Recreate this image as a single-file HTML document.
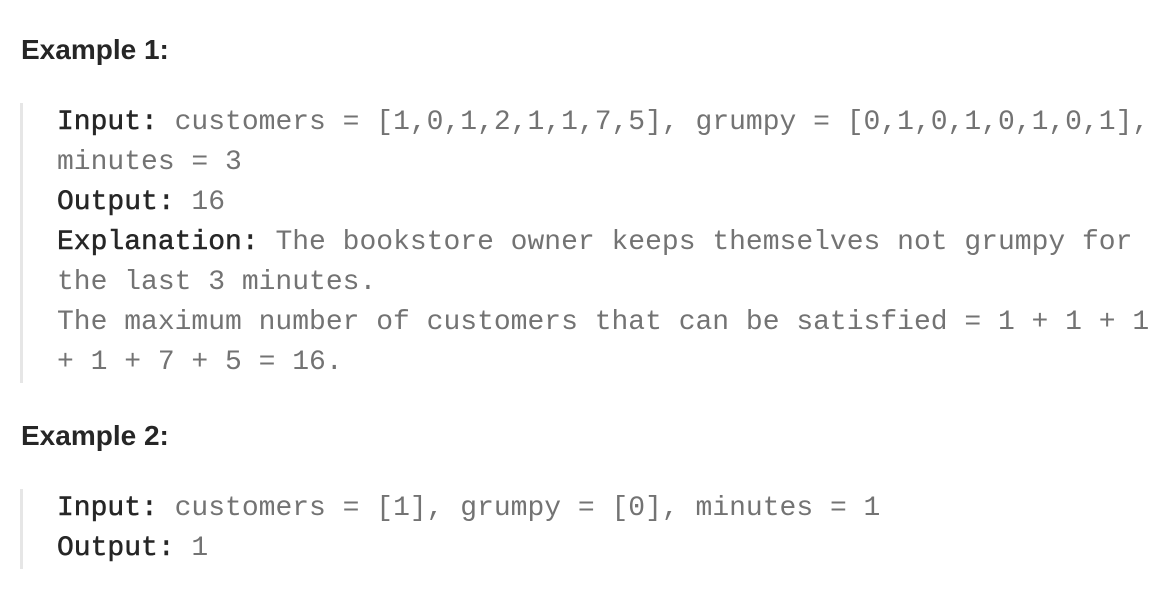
<!DOCTYPE html>
<html><head><style>
html,body{margin:0;padding:0;background:#fff;width:1168px;height:614px;overflow:hidden}
h3{position:absolute;left:21px;margin:0;font:bold 28px/30px "Liberation Sans",sans-serif;color:#262626}
.bq{position:absolute;left:20px;border-left:3px solid #e6e6e6;padding-left:34px;font:28px/40px "Liberation Mono",monospace;color:#737373;white-space:pre}
b{color:#262626;font-weight:normal;-webkit-text-stroke:0.5px #262626}
</style></head><body>
<h3 style="top:35px">Example 1:</h3>
<div class="bq" style="top:103px"><b>Input:</b> customers = [1,0,1,2,1,1,7,5], grumpy = [0,1,0,1,0,1,0,1],
minutes = 3
<b>Output:</b> 16
<b>Explanation:</b> The bookstore owner keeps themselves not grumpy for
the last 3 minutes.
The maximum number of customers that can be satisfied = 1 + 1 + 1
+ 1 + 7 + 5 = 16.</div>
<h3 style="top:421px">Example 2:</h3>
<div class="bq" style="top:489px"><b>Input:</b> customers = [1], grumpy = [0], minutes = 1
<b>Output:</b> 1</div>
</body></html>
